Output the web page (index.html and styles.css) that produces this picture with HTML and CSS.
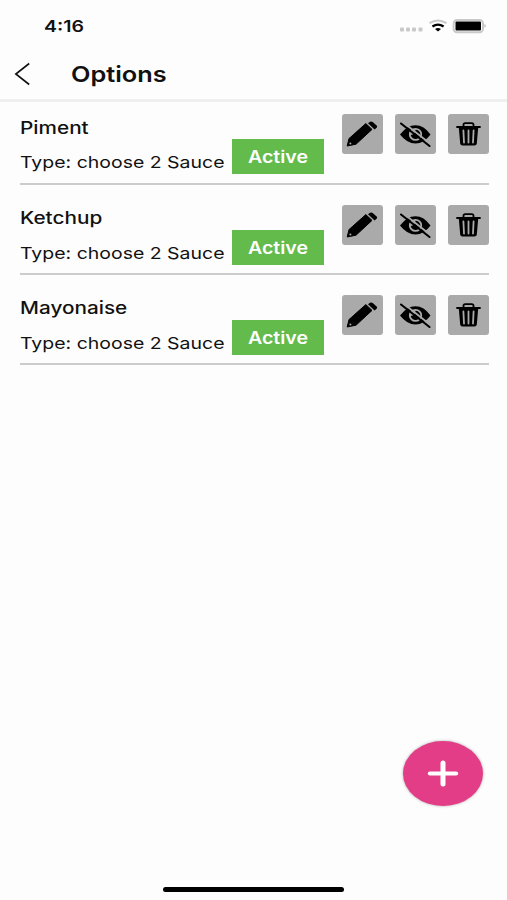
FILE: index.html
```html
<!DOCTYPE html>
<html lang="en">
<head>
<meta charset="utf-8">
<title>Options</title>
<link rel="stylesheet" href="styles.css">
</head>
<body>
<svg class="defs" aria-hidden="true">
  <symbol id="pencil" viewBox="0 0 41 40">
    <path d="M5.2 32 7 24.6 23.8 9.6 30 15.4 14 30.2Z" stroke="#000" stroke-width="1" stroke-linejoin="round"/>
    <path d="M26 9.2 28 7.8Q29.4 7 30.7 8L34.6 11.6Q35.6 12.8 34.6 13.8L32.6 15.4Z"/>
    <circle cx="8.4" cy="29.4" r="1" fill="#aaa"/>
  </symbol>
  <symbol id="hidden" viewBox="0 0 41 40">
    <path fill-rule="evenodd" d="M5 20.5Q12 11.2 20.5 11.2T35.5 20.5Q29 29.5 20.5 29.5T5 20.5ZM20.5 14A6.6 6.4 0 1 0 20.5 26.8A6.6 6.4 0 1 0 20.5 14Z"/>
    <path d="M20.5 15.8A4.8 4.6 0 1 1 15.8 21Q20 20.6 20.5 15.8Z"/>
    <path d="M8 8.3 36.5 30.8" stroke="#aaa" stroke-width="1.8"/>
    <path d="M6 9.5 34.5 32" stroke="#000" stroke-width="2.1" stroke-linecap="round"/>
  </symbol>
  <symbol id="trash" viewBox="0 0 41 40">
    <path d="M15.5 13V10.8Q15.5 9.2 17.2 9.2H23.8Q25.5 9.2 25.5 10.8V13" fill="none" stroke="#000" stroke-width="1.8"/>
    <path d="M9 13H32" stroke="#000" stroke-width="1.8" stroke-linecap="round"/>
    <path d="M10.8 13.5H30.2L28.8 29.5Q28.6 31.5 26.4 31.5H14.6Q12.4 31.5 12.2 29.5Z"/>
    <path d="M15.4 16.5 16 28.5M20.5 16.5V28.5M25.6 16.5 25 28.5" stroke="#aaa" stroke-width="1.8" stroke-linecap="round"/>
  </symbol>
</svg>
<div class="screen">
  <div class="status">
    <span class="clock wide">4:16</span>
    <svg class="indicators" width="88" height="18" viewBox="0 0 88 18">
      <g fill="#c9c9c9"><rect x="1" y="10.5" width="4" height="4" rx="1"/><rect x="7" y="10.5" width="4" height="4" rx="1"/><rect x="13" y="10.5" width="4" height="4" rx="1"/><rect x="19.5" y="10.5" width="4" height="4" rx="1"/></g>
      <path d="M30.5 6.2Q39 .8 47.5 6.2" fill="none" stroke="#c9c9c9" stroke-width="2"/>
      <path d="M33.4 9.5Q39 5.6 44.6 9.5" fill="none" stroke="#000" stroke-width="2.2"/>
      <path d="M36 12Q39 10 42 12L39 14.6Z"/>
      <rect x="54.6" y="3" width="29.4" height="12.2" rx="3.5" fill="#fff" stroke="#c9c9c9" stroke-width="2"/>
      <rect x="56.5" y="4.4" width="25.5" height="9.2" rx="1"/>
      <path d="M85.5 7Q88 8.8 85.5 10.8Z" fill="#aaa"/>
    </svg>
  </div>
  <header class="header">
    <svg width="17" height="24" viewBox="0 0 17 24"><path d="M15.2 1.5 1.8 12 15.2 22.5" fill="none" stroke="#111" stroke-width="1.6"/></svg>
    <h1 class="title wide">Options</h1>
  </header>
  <main class="list">
    <section class="row">
      <div class="info"><h2 class="name wide">Piment</h2><div class="type wide">Type: choose 2 Sauce</div></div>
      <div class="badge"><span class="wide">Active</span></div>
      <div class="actions"><button><svg><use href="#pencil"/></svg></button><button><svg><use href="#hidden"/></svg></button><button><svg><use href="#trash"/></svg></button></div>
    </section>
    <section class="row">
      <div class="info"><h2 class="name wide">Ketchup</h2><div class="type wide">Type: choose 2 Sauce</div></div>
      <div class="badge"><span class="wide">Active</span></div>
      <div class="actions"><button><svg><use href="#pencil"/></svg></button><button><svg><use href="#hidden"/></svg></button><button><svg><use href="#trash"/></svg></button></div>
    </section>
    <section class="row">
      <div class="info"><h2 class="name wide">Mayonaise</h2><div class="type wide">Type: choose 2 Sauce</div></div>
      <div class="badge"><span class="wide">Active</span></div>
      <div class="actions"><button><svg><use href="#pencil"/></svg></button><button><svg><use href="#hidden"/></svg></button><button><svg><use href="#trash"/></svg></button></div>
    </section>
  </main>
  <button class="fab"><svg width="32" height="28" viewBox="0 0 32 28"><path d="M2.8 13.5H29.2" stroke="#fff" stroke-width="4" stroke-linecap="round"/><path d="M16 3V24" stroke="#fff" stroke-width="5" stroke-linecap="round"/></svg></button>
  <div class="home"></div>
</div>
</body>
</html>
```
FILE: styles.css
```css
* { box-sizing: border-box; }
body { margin: 0; background: #fdfdfd; color: #111; font-family: Inter, "Liberation Sans", sans-serif; }
button { border: 0; padding: 0; }
h1, h2 { margin: 0; }
svg { display: block; flex: none; }
.defs { position: absolute; width: 0; height: 0; }
.screen { display: flex; flex-direction: column; height: 900px; overflow: hidden; }
.wide { display: block; width: max-content; white-space: nowrap; transform: scaleX(1.22); transform-origin: 0 50%; }
.status { display: flex; justify-content: space-between; height: 50px; padding: 17px 20px 0 44px; }
.clock { font-size: 16px; line-height: 18px; font-weight: 600; }
.header { display: flex; align-items: center; height: 52px; padding: 0 0 2px 14px; border-bottom: 3px solid #efefef; }
.title { margin-left: 40px; font-size: 22px; line-height: 28px; font-weight: 600; transform: scaleX(1.15); }
.list { flex: 1; padding: 12.3px 18px 0 20px; }
.row { display: flex; height: 70.3px; margin-bottom: 20px; border-bottom: 2px solid #ccc; }
.info { width: 212px; margin-left: -.5px; margin-right: .5px; }
.name { padding-top: 2.4px; font-size: 17px; line-height: 22px; font-weight: 500; }
.type { margin-top: 12.6px; font-size: 16.5px; line-height: 22px; transform: scaleX(1.18); }
.badge { width: 92px; height: 35px; margin-top: 25px; padding-left: 16px; background: #62bb4b; color: #fff; font-size: 17px; line-height: 36px; font-weight: 600; }
.badge .wide { transform: scaleX(1.15); }
.actions { display: flex; gap: 12px; margin-left: 18px; }
.actions button { width: 41px; height: 40px; border-radius: 3px; background: #aaa; }
.actions svg { width: 41px; height: 40px; }
.fab { display: flex; align-items: center; justify-content: center; align-self: flex-end; width: 80px; height: 65px; margin: 0 24px 81px 0; border-radius: 50%; background: #e43d87; box-shadow: 0 0 3px #aaa; }
.home { flex: none; align-self: center; width: 181px; height: 5px; margin-bottom: 8px; border-radius: 3px; background: #000; }
```
